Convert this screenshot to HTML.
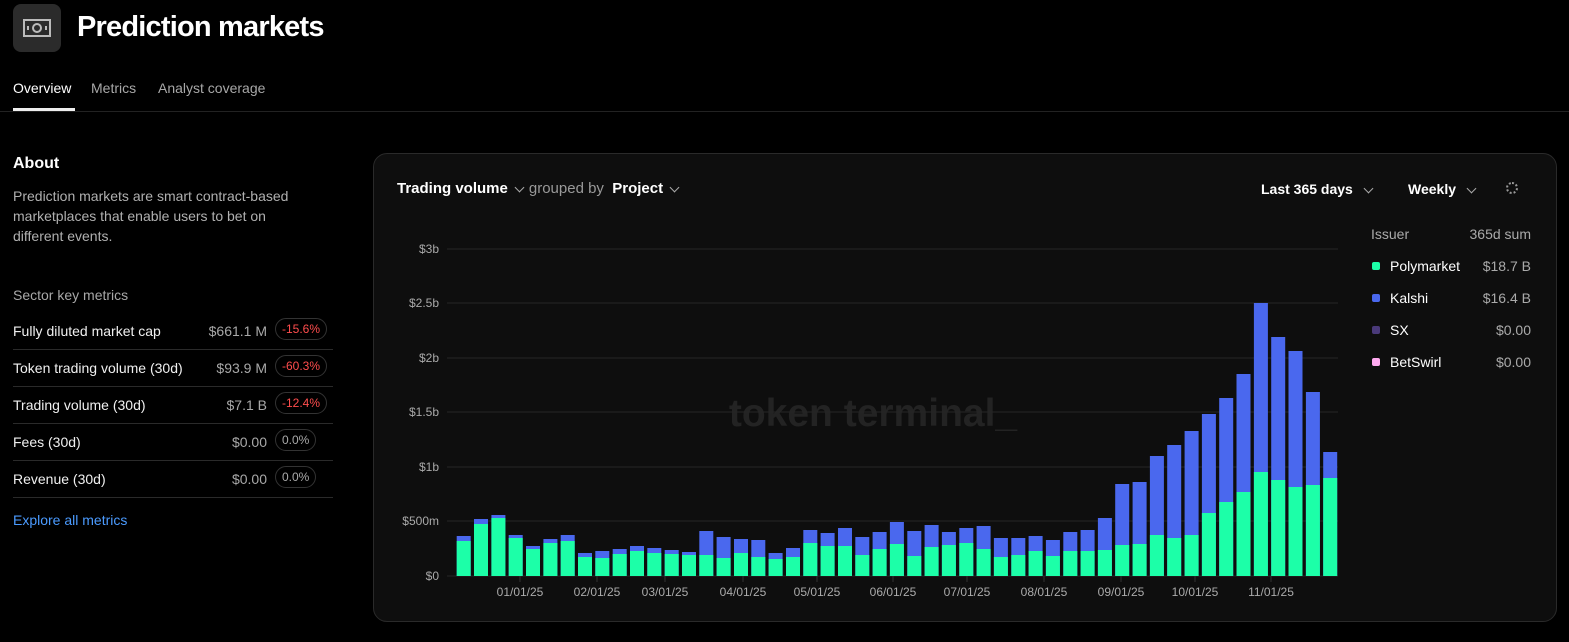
<!DOCTYPE html>
<html><head><meta charset="utf-8"><style>
*{margin:0;padding:0;box-sizing:border-box}
body{width:1569px;height:642px;background:#000;color:#fff;font-family:"Liberation Sans",sans-serif;position:relative;overflow:hidden}
.abs{position:absolute}
.icon{left:13px;top:4px;width:48px;height:48px;background:#2b2b2b;border-radius:8px}
h1{position:absolute;left:77px;top:11px;font-size:29px;font-weight:bold;letter-spacing:-0.8px}
.tab{position:absolute;top:80px;font-size:14px;color:#a8a8a8}
.row{position:absolute;left:13px;width:320px;height:37px;border-bottom:1px solid #2a2a2a;font-size:14px}
.row .l{position:absolute;left:0;top:10px;color:#f0f0f0}
.row .v{position:absolute;right:66px;top:10px;color:#a8a8a8}
.pill{position:absolute;left:262px;top:5px;height:22px;border:1px solid #333;border-radius:11px;font-size:12px;line-height:20px;padding:0 6px}
.red{color:#ff4d4d}.gr{color:#aaa}
.card{left:373px;top:153px;width:1184px;height:469px;background:#0e0e0e;border:1px solid #2a2a2a;border-radius:14px}
.leg{position:absolute;font-size:14px}
.chev{display:inline-block;width:7px;height:7px;border-right:1.5px solid #aaa;border-bottom:1.5px solid #aaa;transform:rotate(45deg);margin:0 6px 4px 8px;vertical-align:middle}
</style></head><body>
<div class="abs icon"><svg width="48" height="48"><rect x="11" y="16" width="26" height="16" fill="none" stroke="#bbb" stroke-width="2"/><circle cx="24" cy="24" r="4" fill="none" stroke="#bbb" stroke-width="2"/><rect x="14" y="22" width="2" height="4" fill="#bbb"/><rect x="32" y="22" width="2" height="4" fill="#bbb"/></svg></div>
<h1>Prediction markets</h1>
<div class="tab" style="left:13px;color:#fff">Overview</div>
<div class="tab" style="left:91px">Metrics</div>
<div class="tab" style="left:158px">Analyst coverage</div>
<div class="abs" style="left:13px;top:108px;width:62px;height:3px;background:#eee"></div>
<div class="abs" style="left:0;top:111px;width:1569px;height:1px;background:#222"></div>
<div class="abs" style="left:13px;top:155px;font-size:16px;font-weight:bold">About</div>
<div class="abs" style="left:13px;top:186px;width:296px;font-size:14px;line-height:20px;color:#b0b0b0">Prediction markets are smart contract-based marketplaces that enable users to bet on different events.</div>
<div class="abs" style="left:13px;top:287px;font-size:14px;color:#a8a8a8">Sector key metrics</div>
<div class="row" style="top:313px"><span class="l">Fully diluted market cap</span><span class="v">$661.1 M</span><span class="pill red">-15.6%</span></div>
<div class="row" style="top:350px"><span class="l">Token trading volume (30d)</span><span class="v">$93.9 M</span><span class="pill red">-60.3%</span></div>
<div class="row" style="top:387px"><span class="l">Trading volume (30d)</span><span class="v">$7.1 B</span><span class="pill red">-12.4%</span></div>
<div class="row" style="top:424px"><span class="l">Fees (30d)</span><span class="v">$0.00</span><span class="pill gr">0.0%</span></div>
<div class="row" style="top:461px"><span class="l">Revenue (30d)</span><span class="v">$0.00</span><span class="pill gr">0.0%</span></div>
<div class="abs" style="left:13px;top:512px;font-size:14px;color:#4b9bff">Explore all metrics</div>

<div class="abs card"></div>
<div class="abs" style="left:397px;top:180px;font-size:15px;font-weight:bold">Trading volume<span class="chev"></span><span style="color:#999;font-weight:normal">grouped by</span>&nbsp; Project<span class="chev"></span></div>
<div class="abs" style="left:1261px;top:181px;font-size:14px;font-weight:bold">Last 365 days<span class="chev" style="margin-left:12px"></span></div>
<div class="abs" style="left:1408px;top:181px;font-size:14px;font-weight:bold">Weekly<span class="chev" style="margin-left:12px"></span></div>
<div class="abs" style="left:1506px;top:182px;width:12px;height:12px;border:2px dotted #999;border-radius:50%"></div>
<div class="leg" style="left:1371px;top:226px;color:#aaa">Issuer</div>
<div class="leg" style="left:1466px;top:226px;width:65px;text-align:right;color:#aaa">365d sum</div>
<div class="abs" style="left:1372px;top:262px;width:8px;height:8px;border-radius:2px;background:#1cffa8"></div><div class="leg" style="left:1390px;top:258px">Polymarket</div><div class="leg" style="left:1466px;top:258px;width:65px;text-align:right;color:#aaa">$18.7 B</div>
<div class="abs" style="left:1372px;top:294px;width:8px;height:8px;border-radius:2px;background:#4a68ee"></div><div class="leg" style="left:1390px;top:290px">Kalshi</div><div class="leg" style="left:1466px;top:290px;width:65px;text-align:right;color:#aaa">$16.4 B</div>
<div class="abs" style="left:1372px;top:326px;width:8px;height:8px;border-radius:2px;background:#4a3a7a"></div><div class="leg" style="left:1390px;top:322px">SX</div><div class="leg" style="left:1466px;top:322px;width:65px;text-align:right;color:#aaa">$0.00</div>
<div class="abs" style="left:1372px;top:358px;width:8px;height:8px;border-radius:2px;background:#ffaaf0"></div><div class="leg" style="left:1390px;top:354px">BetSwirl</div><div class="leg" style="left:1466px;top:354px;width:65px;text-align:right;color:#aaa">$0.00</div>

<svg class="abs" style="left:0;top:0" width="1569" height="642" id="ch">
<text x="873" y="426" text-anchor="middle" font-size="39" font-weight="bold" fill="#232323" font-family="Liberation Sans,sans-serif">token terminal_</text>
</svg>
<script>
var s=document.getElementById('ch'),h='';
var grid=[[249,'$3b'],[303,'$2.5b'],[358,'$2b'],[412,'$1.5b'],[467,'$1b'],[521,'$500m'],[576,'$0']];
grid.forEach(function(g){h+='<line x1="447" x2="1338" y1="'+g[0]+'" y2="'+g[0]+'" stroke="#262626"/><text x="439" y="'+(g[0]+4)+'" text-anchor="end" font-size="12" fill="#aaa" font-family="Liberation Sans,sans-serif">'+g[1]+'</text>';});
var b=[[536,541],[519,524],[515,518],[535,538],[546,549],[539,543],[535,541],[553,557],[551,558],[549,554],[546,551],[548,553],[550,554],[552,555],[531,555],[537,558],[539,553],[540,557],[553,559],[548,557],[530,543],[533,546],[528,546],[537,555],[532,549],[522,544],[531,556],[525,547],[532,545],[528,543],[526,549],[538,557],[538,555],[536,551],[540,556],[532,551],[530,551],[518,550],[484,545],[482,544],[456,535],[445,538],[431,535],[414,513],[398,502],[374,492],[303,472],[337,480],[351,487],[392,485],[452,478]];
b.forEach(function(v,i){var x=(456.7+17.33*i).toFixed(1);h+='<rect x="'+x+'" y="'+v[0]+'" width="14" height="'+(576-v[0])+'" fill="#4a68ee"/><rect x="'+x+'" y="'+v[1]+'" width="14" height="'+(576-v[1])+'" fill="#1cffa8"/>';});
var xl=[[520,'01/01/25'],[597,'02/01/25'],[665,'03/01/25'],[743,'04/01/25'],[817,'05/01/25'],[893,'06/01/25'],[967,'07/01/25'],[1044,'08/01/25'],[1121,'09/01/25'],[1195,'10/01/25'],[1271,'11/01/25']];
xl.forEach(function(t){h+='<line x1="'+t[0]+'" x2="'+t[0]+'" y1="576" y2="582" stroke="#333"/><text x="'+t[0]+'" y="596" text-anchor="middle" font-size="12" fill="#aaa" font-family="Liberation Sans,sans-serif">'+t[1]+'</text>';});
s.insertAdjacentHTML('beforeend',h);
</script>
</body></html>
